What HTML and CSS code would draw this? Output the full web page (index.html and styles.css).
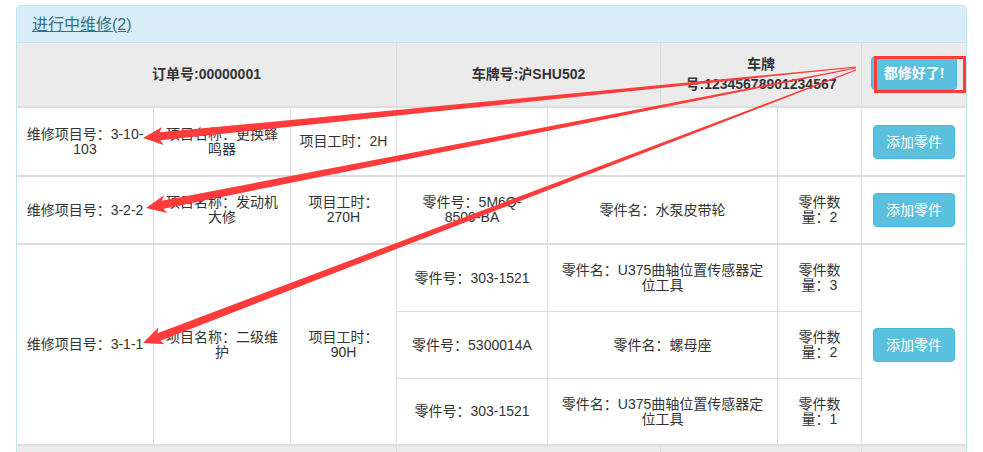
FILE: index.html
```html
<!DOCTYPE html>
<html lang="zh-CN">
<head>
<meta charset="utf-8">
<title>进行中维修</title>
<link rel="stylesheet" href="styles.css">
</head>
<body>
<div class="panel">
  <div class="panel-heading"><a class="panel-title" href="#">进行中维修(2)</a></div>
  <div class="orders">
    <div class="order-head">
      <div class="hcell"><span>订单号:00000001</span></div>
      <div class="hcell"><span>车牌号:沪SHU502</span></div>
      <div class="hcell"><span>车牌<br>号:12345678901234567</span></div>
      <div class="hcell"><button class="btn btn-done">都修好了!</button></div>
    </div>

    <div class="item item-a">
      <div class="cell"><span>维修项目号：3-10-<wbr>103</span></div>
      <div class="cell"><span>项目名称：更换蜂鸣器</span></div>
      <div class="cell"><span>项目工时：2H</span></div>
      <div class="cell"></div>
      <div class="cell"></div>
      <div class="cell qty"></div>
      <div class="cell"><button class="btn">添加零件</button></div>
    </div>

    <div class="item item-b">
      <div class="cell"><span>维修项目号：3-2-2</span></div>
      <div class="cell"><span>项目名称：发动机大修</span></div>
      <div class="cell"><span>项目工时：270H</span></div>
      <div class="cell"><span>零件号：5M6Q-<wbr><span class="nw">8509-BA</span></span></div>
      <div class="cell"><span>零件名：水泵皮带轮</span></div>
      <div class="cell qty"><span>零件数量：2</span></div>
      <div class="cell"><button class="btn">添加零件</button></div>
    </div>

    <div class="item item-c">
      <div class="cell span3"><span>维修项目号：3-1-1</span></div>
      <div class="cell span3"><span>项目名称：二级维护</span></div>
      <div class="cell span3"><span>项目工时：90H</span></div>
      <div class="cell"><span>零件号：303-1521</span></div>
      <div class="cell"><span>零件名：U375曲轴位置传感器定位工具</span></div>
      <div class="cell qty"><span>零件数量：3</span></div>
      <div class="cell span3"><button class="btn">添加零件</button></div>
      <div class="cell"><span>零件号：5300014A</span></div>
      <div class="cell"><span>零件名：螺母座</span></div>
      <div class="cell qty"><span>零件数量：2</span></div>
      <div class="cell"><span>零件号：303-1521</span></div>
      <div class="cell"><span>零件名：U375曲轴位置传感器定位工具</span></div>
      <div class="cell qty"><span>零件数量：1</span></div>
    </div>

    <div class="order-head">
      <div class="hcell"></div>
      <div class="hcell"></div>
      <div class="hcell"></div>
      <div class="hcell"></div>
    </div>
  </div>
</div>

<svg class="annot" width="983" height="452" viewBox="0 0 983 452" aria-hidden="true">
  <rect x="875.5" y="57.5" width="89" height="34" fill="none" stroke="#ff3b3b" stroke-width="3"/>
  <g fill="#ff3b3b">
    <polygon transform="translate(143 138) rotate(-5.687)" points="0,0 20,-9 17,-4 716.5,-0.5 716.5,0.5 17,4 20,9"/>
    <polygon transform="translate(146 208) rotate(-11.155)" points="0,0 20,-9 17,-4 723.7,-0.5 723.7,0.5 17,4 20,9"/>
    <polygon transform="translate(143 343) rotate(-20.95)" points="0,0 20,-9 17,-4 763.5,-0.5 763.5,0.5 17,4 20,9"/>
  </g>
</svg>
</body>
</html>
```

FILE: styles.css
```css
html, body {
  margin: 0;
  padding: 0;
  overflow: hidden;
  background: #fff;
}

body {
  position: relative;
  width: 983px;
  height: 452px;
  font-family: "Liberation Sans", "Noto Sans CJK SC", sans-serif;
  font-size: 14px;
  color: #333;
}

.panel {
  box-sizing: border-box;
  width: 951px;
  margin: 5px 0 0 16px;
  border: 1px solid #bce8f1;
  border-radius: 4px;
  background: #fff;
  overflow: hidden;
}

.panel-heading {
  box-sizing: border-box;
  height: 37px;
  padding: 0 15px;
  display: flex;
  align-items: center;
  background: #d9edf7;
  border-bottom: 1px solid #bce8f1;
}

.panel-title {
  font-size: 16px;
  line-height: 18px;
  color: #31708f;
  text-decoration: underline;
  margin-top: 1px;
}

.orders {
  display: flex;
  flex-direction: column;
  gap: 2px;
  background: #ddd;
}

.order-head {
  display: grid;
  grid-template-columns: 379px 263px 200px 104px;
  grid-template-rows: 63px;
  column-gap: 1px;
  background: #ddd;
}

.hcell {
  background: #ebebeb;
  display: flex;
  align-items: center;
  justify-content: center;
  text-align: center;
  padding: 0 8px 2px;
  font-weight: bold;
  line-height: 20px;
}

.item {
  display: grid;
  grid-template-columns: 136px 136px 105px 150px 229px 83px 104px;
  gap: 1px;
  background: #ddd;
}

.item-a { grid-template-rows: 67px; }
.item-b { grid-template-rows: 66px; }
.item-c { grid-template-rows: 66px 66px 65px; }

.cell {
  background: #fff;
  display: flex;
  align-items: center;
  justify-content: center;
  text-align: center;
  padding: 0 8px;
  line-height: 15px;
}

.cell.qty {
  padding: 0 15px;
}

.span3 {
  grid-row: span 3;
}

.nw {
  white-space: nowrap;
}

.btn {
  font-family: inherit;
  font-size: 14px;
  line-height: 20px;
  padding: 6px 12px;
  color: #fff;
  background: #5bc0de;
  border: 1px solid #46b8da;
  border-radius: 4px;
  cursor: pointer;
  white-space: nowrap;
}

.btn-done {
  font-weight: bold;
  margin-top: -1px;
}

.annot {
  position: absolute;
  left: 0;
  top: 0;
  pointer-events: none;
}
```
